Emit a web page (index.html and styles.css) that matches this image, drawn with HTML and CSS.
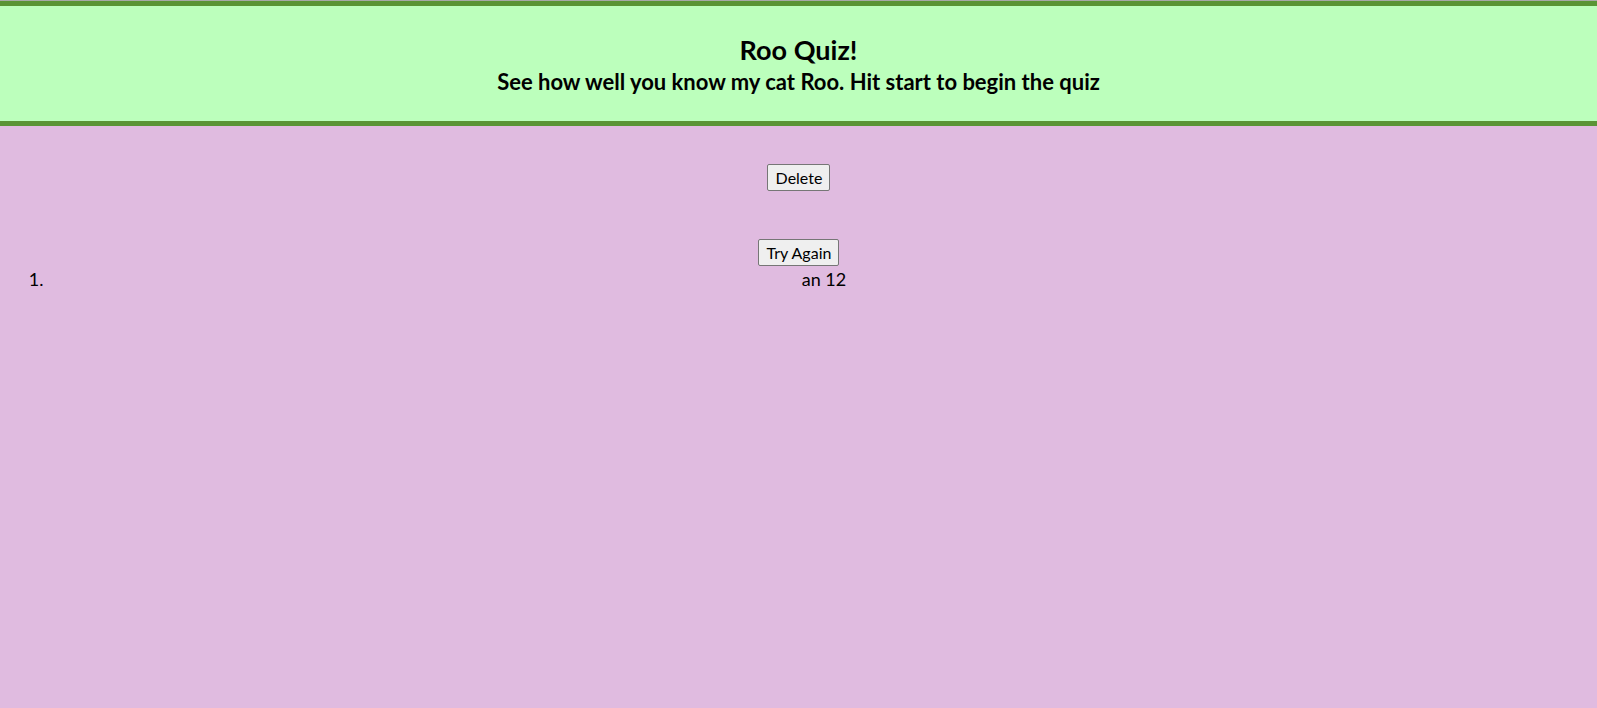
FILE: index.html
```html
<!DOCTYPE html>
<html>
<head>
<meta charset="utf-8">
<link rel="stylesheet" href="styles.css">
</head>
<body>
<div class="topline"></div>
<header class="header">
  <h1 class="title">Roo Quiz!</h1>
  <h2 class="subtitle">See how well you know my cat Roo. Hit start to begin the quiz</h2>
</header>
<main class="main">
  <div class="row row-delete"><button class="btn">Delete</button></div>
  <div class="row row-try"><button class="btn">Try Again</button></div>
  <ol class="scores">
    <li class="score">an 12</li>
  </ol>
</main>
</body>
</html>
```
FILE: styles.css
```css
html, body {
  margin: 0;
  padding: 0;
  background: #e0bbe0;
  font-family: Lato, "Open Sans", sans-serif;
  color: #000;
}
.topline {
  height: 1px;
  background: #a8a8a8;
}
.header {
  background: #bcffbc;
  border-top: 5px solid #5a9435;
  border-bottom: 5px solid #5a9435;
  height: 115px;
  box-sizing: content-box;
  text-align: center;
  display: flex;
  flex-direction: column;
  align-items: center;
}
.title {
  margin: 28px 0 0 0;
  font-size: 27px;
  line-height: 32px;
  font-weight: 700;
}
.subtitle {
  margin: 3px 0 0 0;
  font-size: 22px;
  line-height: 26px;
  font-weight: 700;
}
.main {
  display: flex;
  flex-direction: column;
}
.row {
  display: flex;
  justify-content: center;
}
.row-delete {
  margin-top: 38px;
}
.row-try {
  margin-top: 48px;
}
.btn {
  font-family: Lato, "Open Sans", sans-serif;
  font-size: 16px;
  line-height: 20px;
  padding: 3px 7px 2px 8px;
  background: #efefef;
  border: 1px solid #767676;
  border-radius: 2px;
  color: #000;
}
.scores {
  margin: 0 8px;
  padding-left: 40px;
  padding-top: 1px;
  font-size: 18px;
  line-height: 24px;
}
.score {
  text-align: center;
  padding-left: 11px;
}
```
